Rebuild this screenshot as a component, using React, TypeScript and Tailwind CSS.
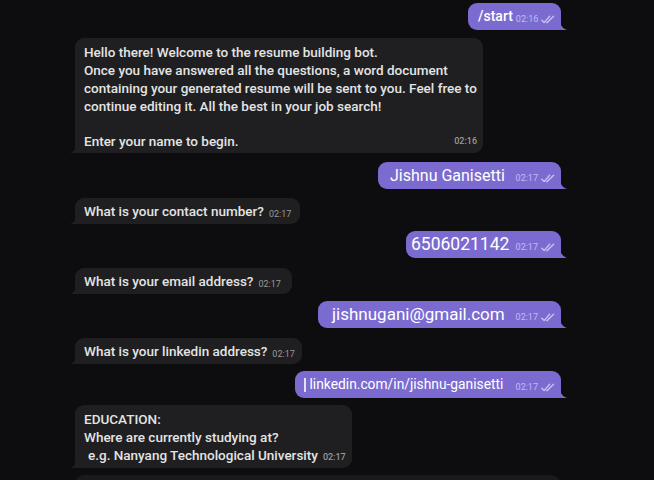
import React from 'react';

const PURPLE = '#7b6bd0';
const DARK = '#1f1f21';

function Checks({ color = '#c9c0f5' }: { color?: string }) {
  return (
    <svg width="14" height="9" viewBox="0 0 14 9" fill="none" className="ml-[3px]">
      <path d="M0.8 5.2 L3.2 7.6 L8.6 1.2" stroke={color} strokeWidth="1.4" strokeLinecap="round" strokeLinejoin="round" />
      <path d="M5.6 7.6 L6.2 7.6 L12.6 1.2" stroke={color} strokeWidth="1.4" strokeLinecap="round" strokeLinejoin="round" />
    </svg>
  );
}

function TailRight() {
  return (
    <svg width="8" height="12" viewBox="0 0 8 12" className="absolute right-[-6px] bottom-0">
      <path d="M0 0 C0.5 6 3 10 8 12 L0 12 Z" fill={PURPLE} />
    </svg>
  );
}

function TailLeft() {
  return (
    <svg width="8" height="12" viewBox="0 0 8 12" className="absolute left-[-5px] bottom-0">
      <path d="M8 0 C7.5 6 5 10 0 12 L8 12 Z" fill={DARK} />
    </svg>
  );
}

function Out({
  text,
  time,
  width,
  mt,
  textClass,
  cursor,
}: {
  text: string;
  time: string;
  width: string;
  mt: string;
  textClass: string;
  cursor?: boolean;
}) {
  return (
    <div className={`relative self-end flex items-center justify-between gap-[3px] h-[27px] rounded-[9px] rounded-br-none bg-[#7b6bd0] pr-[6px] ${width} ${mt}`}>
      <div className={`flex items-center text-white whitespace-nowrap ${textClass}`}>
        {cursor && <span className="inline-block w-[1.5px] h-[14px] bg-[#e6e0ff] mr-[4px]" />}
        {text}
      </div>
      <div className="flex items-center pt-[6px] text-[9px] text-[#c4baf3]">
        {time}
        <Checks />
      </div>
      <TailRight />
    </div>
  );
}

function In({ text, time, width, mt }: { text: string; time: string; width: string; mt: string }) {
  return (
    <div className={`relative self-start flex items-center h-[26px] rounded-[9px] rounded-bl-none bg-[#1f1f21] pl-[9px] ${width} ${mt}`}>
      <span className="text-[13.5px] font-medium text-[#e4e4e4] whitespace-nowrap">{text}</span>
      <span className="ml-[5px] pt-[8px] text-[9px] text-[#9a9a9c]">{time}</span>
      <TailLeft />
    </div>
  );
}

export default function App() {
  return (
    <div className="w-[654px] h-[480px] overflow-hidden bg-[#0d0d0f] font-['Roboto',sans-serif]">
      <div className="flex flex-col pl-[75px] pr-[93px] pt-[3px]">
        <Out text="/start" time="02:16" width="w-[93px]" mt="mt-0" textClass="pl-[10px] text-[14px] font-medium" />

        <div className="relative self-start w-[408px] h-[115px] mt-[8px] rounded-[9px] rounded-bl-none bg-[#1f1f21] pl-[9px] pt-[5px] text-[13.5px] font-medium leading-[18px] text-[#e4e4e4]">
          <p>Hello there! Welcome to the resume building bot.</p>
          <p>Once you have answered all the questions, a word document</p>
          <p>containing your generated resume will be sent to you. Feel free to</p>
          <p>continue editing it. All the best in your job search!</p>
          <p className="mt-[17px]">Enter your name to begin.</p>
          <span className="absolute right-[6px] bottom-[3px] text-[9px] text-[#9a9a9c]">02:16</span>
          <TailLeft />
        </div>

        <Out text="Jishnu Ganisetti" time="02:17" width="w-[183px]" mt="mt-[9px]" textClass="pl-[12px] text-[16px]" />
        <In text="What is your contact number?" time="02:17" width="w-[225px]" mt="mt-[9px]" />
        <Out text="6506021142" time="02:17" width="w-[155px]" mt="mt-[7px]" textClass="pl-[5px] text-[17.5px]" />
        <In text="What is your email address?" time="02:17" width="w-[217px]" mt="mt-[10px]" />
        <Out text="jishnugani@gmail.com" time="02:17" width="w-[243px]" mt="mt-[7px]" textClass="pl-[14px] text-[17px]" />
        <In text="What is your linkedin address?" time="02:17" width="w-[227px]" mt="mt-[10px]" />
        <Out text="linkedin.com/in/jishnu-ganisetti" time="02:17" width="w-[266px]" mt="mt-[7px]" textClass="pl-[9px] text-[13.8px]" cursor />

        <div className="relative self-start w-[277px] h-[63px] mt-[7px] rounded-[9px] rounded-bl-none bg-[#1f1f21] pl-[9px] pt-[5px] text-[13.5px] font-medium leading-[18px] text-[#e4e4e4]">
          <p>EDUCATION:</p>
          <p>Where are currently studying at?</p>
          <p className="flex items-end pl-[4px]">
            e.g. Nanyang Technological University
            <span className="ml-[5px] text-[9px] leading-[14px] text-[#9a9a9c]">02:17</span>
          </p>
          <TailLeft />
        </div>

        <div className="self-start w-[485px] h-[20px] mt-[7px] rounded-t-[9px] bg-[#1a1a1c]" />
      </div>
    </div>
  );
}
